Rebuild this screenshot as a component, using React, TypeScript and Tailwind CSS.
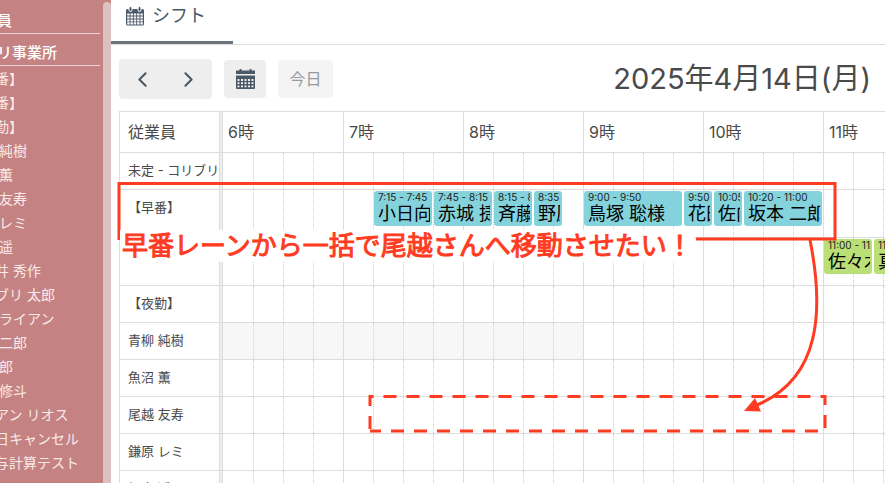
import { ChevronLeft, ChevronRight } from 'lucide-react';

type Shift = { start: number; end: number; time: string; name: string; tone: 'blue' | 'green' };
type Row = { label: string; tall?: boolean; shaded?: boolean; shifts?: Shift[] };

const PX_PER_MIN = 2;
const at = (h: number, m = 0) => h * 60 + m;
const DAY_START = at(6);

const SIDEBAR = [
  '【早番】', '【遅番】', '【夜勤】', '青柳 純樹', '魚沼 薫', '尾越 友寿', '鎌原 レミ', '福本 遥',
  '今村井 秀作', 'コリブリ 太郎', '原 ブライアン', '坂本 二郎', '三田 郎', '高木 修斗',
  'ライアン リオス', '＊当日キャンセル', '＊給与計算テスト',
];

const ROWS: Row[] = [
  { label: '未定 - コリブリ' },
  {
    label: '【早番】',
    tall: true,
    shifts: [
      { start: at(7, 15), end: at(7, 45), time: '7:15 - 7:45', name: '小日向', tone: 'blue' },
      { start: at(7, 45), end: at(8, 15), time: '7:45 - 8:15', name: '赤城 捷', tone: 'blue' },
      { start: at(8, 15), end: at(8, 35), time: '8:15 - 8:35', name: '斉藤', tone: 'blue' },
      { start: at(8, 35), end: at(8, 50), time: '8:35', name: '野原', tone: 'blue' },
      { start: at(9), end: at(9, 50), time: '9:00 - 9:50', name: '鳥塚 聡様', tone: 'blue' },
      { start: at(9, 50), end: at(10, 5), time: '9:50', name: '花田', tone: 'blue' },
      { start: at(10, 5), end: at(10, 20), time: '10:05', name: '佐内', tone: 'blue' },
      { start: at(10, 20), end: at(11), time: '10:20 - 11:00', name: '坂本 二郎', tone: 'blue' },
    ],
  },
  {
    label: '【遅番】',
    tall: true,
    shifts: [
      { start: at(11), end: at(11, 25), time: '11:00 - 11:25', name: '佐々木', tone: 'green' },
      { start: at(11, 25), end: at(11, 50), time: '11:25 - 11:50', name: '真田', tone: 'green' },
    ],
  },
  { label: '【夜勤】' },
  { label: '青柳 純樹', shaded: true },
  { label: '魚沼 薫' },
  { label: '尾越 友寿' },
  { label: '鎌原 レミ' },
  { label: '福本 遥' },
];

const HOURS = [6, 7, 8, 9, 10, 11];

const CalendarOutline = () => (
  <svg width="18" height="20" viewBox="0 0 18 20" fill="currentColor" aria-hidden="true">
    <path d="M1.5 3h15A1.5 1.5 0 0 1 18 4.5V18a1.5 1.5 0 0 1-1.5 1.5h-15A1.5 1.5 0 0 1 0 18V4.5A1.5 1.5 0 0 1 1.5 3z" />
    <rect x="3" y="0.5" width="3" height="5" rx="1.5" stroke="#ffffff" strokeWidth="1" />
    <rect x="12" y="0.5" width="3" height="5" rx="1.5" stroke="#ffffff" strokeWidth="1" />
    <path
      d="M1.2 8.5h16M1.2 11.5h16M1.2 14.5h16M1.2 17.3h16"
      stroke="#ffffff"
      strokeWidth="2.2"
      strokeDasharray="2.4 0.9"
      fill="none"
    />
  </svg>
);

const CalendarSolid = () => (
  <svg width="19" height="20" viewBox="0 0 19 20" fill="currentColor" aria-hidden="true">
    <path d="M0 1.5h19V5H0z" />
    <path d="M3.5 0h2v3h-2zM13.5 0h2v3h-2z" />
    <path d="M0 6.5h19V19a1 1 0 0 1-1 1H1a1 1 0 0 1-1-1z" />
    <path
      d="M1.5 11h16M1.5 14.2h16M1.5 17.4h16"
      stroke="#eeeeee"
      strokeWidth="1.8"
      strokeDasharray="2 1.5"
      fill="none"
    />
  </svg>
);

const Sidebar = () => (
  <aside className="flex w-[111px] shrink-0 overflow-hidden bg-[#c58282] text-[#f8eaea]">
    <div className="min-w-0 flex-1 overflow-hidden pt-2 whitespace-nowrap">
      <div className="mr-[3px] border-b border-[#ecd4d4] text-[15px] leading-[25px] font-medium text-white">
        <span className="-ml-[33px]">従業員</span>
      </div>
      <div className="mr-[3px] mb-px border-b border-[#ecd4d4] pt-[6px] text-[15px] leading-[25px] font-medium text-white">
        <span className="-ml-[33px]">リブリ事業所</span>
      </div>
      <ul className="-ml-[33px] text-sm leading-6">
        {SIDEBAR.map((name) => (
          <li key={name}>{name}</li>
        ))}
      </ul>
    </div>
    <div className="mt-[2px] w-2 shrink-0 rounded-t-full bg-[#dcc1c1]" />
  </aside>
);

const ShiftCard = ({ shift }: { shift: Shift }) => (
  <div
    className={`absolute top-px h-[35px] overflow-hidden rounded-[3px] px-[2px] text-black ${shift.tone === 'blue' ? 'bg-[#84d3dc]' : 'bg-[#badf76]'}`}
    style={{
      left: (shift.start - DAY_START) * PX_PER_MIN + 1,
      width: (shift.end - shift.start) * PX_PER_MIN - 2,
    }}
  >
    <div className="overflow-hidden pl-[2px] whitespace-nowrap">
      <div className="text-[10px] leading-[13px] text-[#222]">{shift.time}</div>
      <div className="text-lg leading-5">{shift.name}</div>
    </div>
  </div>
);

const Lane = ({ row }: { row: Row }) => (
  <div className={`relative flex ${row.tall ? 'h-[47px]' : 'h-9'}`}>
    {HOURS.map((hour) => (
      <div
        key={hour}
        className={`flex w-[120px] shrink-0 first:w-[121px] ${row.shaded && hour < 9 ? 'bg-[#f7f7f7]' : ''}`}
      >
        <div className="flex-1 border-r border-dotted border-[#d0d0d0]" />
        <div className="w-[30px] border-r border-dotted border-[#d0d0d0]" />
        <div className="w-[30px] border-r border-dotted border-[#d0d0d0]" />
        <div className="w-[30px] border-r border-[#dddddd]" />
      </div>
    ))}
    {row.shifts?.map((shift) => <ShiftCard key={shift.time} shift={shift} />)}
  </div>
);

const Schedule = () => (
  <table className="w-[825px] table-fixed border-separate border-spacing-0 border-t border-l border-[#dddddd] text-left text-[#4a4a4a]">
    <colgroup>
      <col className="w-[100px]" />
      <col className="w-[3px]" />
      {HOURS.map((hour) => (
        <col key={hour} className={hour === 6 ? 'w-[121px]' : 'w-[120px]'} />
      ))}
    </colgroup>
    <thead>
      <tr className="h-[41px] text-base">
        <th className="border-r border-b border-[#dddddd] p-0 pl-2 font-normal">従業員</th>
        <th className="border-r border-b border-[#dddddd] bg-[#eeeeee] p-0" />
        {HOURS.map((hour) => (
          <th key={hour} className="border-r border-b border-[#dddddd] p-0 pl-[5px] font-normal">
            {hour}時
          </th>
        ))}
      </tr>
    </thead>
    <tbody>
      {ROWS.map((row) => (
        <tr key={row.label}>
          <th className="overflow-hidden border-r border-b border-[#dddddd] p-0 pt-[7px] pl-2 align-top text-[13px] leading-5 font-normal whitespace-nowrap">
            {row.label}
          </th>
          <td className="border-r border-b border-[#dddddd] bg-[#eeeeee] p-0" />
          <td colSpan={6} className="border-b border-[#dddddd] p-0">
            <Lane row={row} />
          </td>
        </tr>
      ))}
    </tbody>
  </table>
);

// Red marks drawn over the schedule
const Annotation = () => (
  <div className="pointer-events-none absolute inset-0">
    <svg className="absolute inset-0 h-full w-full" fill="none" stroke="#ff3b22" aria-hidden="true">
      <path d="M119 240V183.5H835V239H696" strokeWidth="3" />
      <path d="M370 431H825V396.5H370z" strokeWidth="3" strokeDasharray="13 10" strokeDashoffset="2" />
      <path d="M810 240C824 310 821 378 757 405" strokeWidth="3" />
      <path d="M744 411L755 398L761 411.5z" fill="#ff3b22" stroke="none" />
    </svg>
    <p className="absolute top-[230px] left-[120px] bg-white pr-[1px] pl-[2px] text-[26px] leading-8 whitespace-nowrap text-[#ff3b22] [-webkit-text-stroke:1px_#ff3b22]">
      早番レーンから一括で尾越さんへ移動させたい！
    </p>
  </div>
);

export default function App() {
  return (
    <div className="relative flex h-screen overflow-hidden bg-white font-['Inter','Noto_Sans_CJK_JP',sans-serif]">
      <Sidebar />
      <main className="min-w-0 flex-1 overflow-hidden">
        <nav className="flex h-[45px] border-b border-[#dddddd]">
          <a
            href="#shift"
            className="flex h-11 w-[122px] items-center gap-2 border-b-[3px] border-[#6c757d] pb-[9px] pl-[15px] text-lg text-[#4b5966]"
          >
            <CalendarOutline />
            シフト
          </a>
        </nav>
        <div className="overflow-hidden pt-[14px] pl-2">
          <header className="mb-3 flex h-10 items-center gap-3 pr-[14px]">
            <div className="flex h-10 w-[93px] rounded bg-[#eeeeee] text-[#4b5966]">
              <button type="button" aria-label="前へ" className="flex flex-1 items-center justify-center">
                <ChevronLeft size={25} />
              </button>
              <button type="button" aria-label="次へ" className="flex flex-1 items-center justify-center">
                <ChevronRight size={25} />
              </button>
            </div>
            <button
              type="button"
              aria-label="カレンダー"
              className="flex h-[38px] w-[42px] items-center justify-center rounded bg-[#eeeeee] text-[#4b5966]"
            >
              <CalendarSolid />
            </button>
            <button type="button" disabled className="h-[38px] w-[55px] rounded bg-[#f4f4f4] text-base text-[#969ba0]">
              今日
            </button>
            <h1 className="ml-auto text-[29px] leading-10 whitespace-nowrap text-[#4a4a4a]">2025年4月14日(月)</h1>
          </header>
          <Schedule />
        </div>
      </main>
      <Annotation />
    </div>
  );
}
